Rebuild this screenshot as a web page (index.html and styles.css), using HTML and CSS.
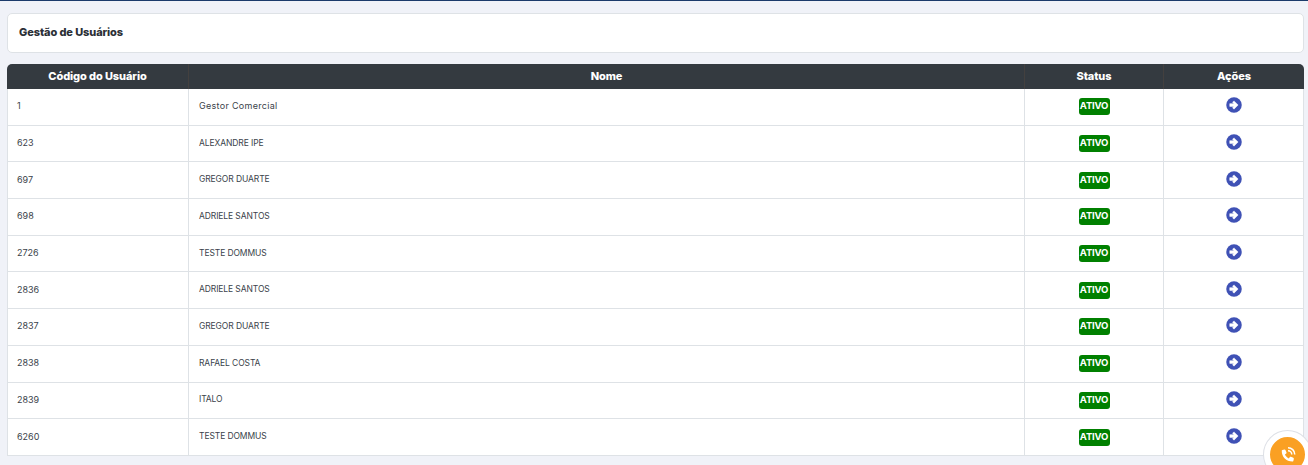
FILE: index.html
```html
<!DOCTYPE html>
<html lang="pt-BR">
<head>
<meta charset="utf-8">
<title>Gestão de Usuários</title>
<link rel="stylesheet" href="styles.css">
</head>
<body>
<svg class="defs" aria-hidden="true"><symbol id="go" viewBox="0 0 512 512"><circle cx="256" cy="256" r="248" fill="#3f51b5"/><path fill="#fff" stroke="#fff" stroke-width="16" stroke-linejoin="round" d="M120 212h130l-40-44 44-44 134 132-134 132-44-44 40-44H120z"/></symbol></svg>
<main class="page">
  <header class="title-card"><h1>Gestão de Usuários</h1></header>
  <table class="users">
    <colgroup><col class="c1"><col class="c2"><col class="c3"><col class="c4"></colgroup>
    <thead><tr><th>Código do Usuário</th><th>Nome</th><th>Status</th><th>Ações</th></tr></thead>
    <tbody>
      <tr><td>1</td><td class="name">Gestor Comercial</td><td class="mid"><span class="badge">ATIVO</span></td><td class="mid"><a class="go"><svg><use href="#go"/></svg></a></td></tr>
      <tr><td>623</td><td class="name upper">ALEXANDRE IPE</td><td class="mid"><span class="badge">ATIVO</span></td><td class="mid"><a class="go"><svg><use href="#go"/></svg></a></td></tr>
      <tr><td>697</td><td class="name upper">GREGOR DUARTE</td><td class="mid"><span class="badge">ATIVO</span></td><td class="mid"><a class="go"><svg><use href="#go"/></svg></a></td></tr>
      <tr><td>698</td><td class="name upper">ADRIELE SANTOS</td><td class="mid"><span class="badge">ATIVO</span></td><td class="mid"><a class="go"><svg><use href="#go"/></svg></a></td></tr>
      <tr><td>2726</td><td class="name upper">TESTE DOMMUS</td><td class="mid"><span class="badge">ATIVO</span></td><td class="mid"><a class="go"><svg><use href="#go"/></svg></a></td></tr>
      <tr><td>2836</td><td class="name upper">ADRIELE SANTOS</td><td class="mid"><span class="badge">ATIVO</span></td><td class="mid"><a class="go"><svg><use href="#go"/></svg></a></td></tr>
      <tr><td>2837</td><td class="name upper">GREGOR DUARTE</td><td class="mid"><span class="badge">ATIVO</span></td><td class="mid"><a class="go"><svg><use href="#go"/></svg></a></td></tr>
      <tr><td>2838</td><td class="name upper">RAFAEL COSTA</td><td class="mid"><span class="badge">ATIVO</span></td><td class="mid"><a class="go"><svg><use href="#go"/></svg></a></td></tr>
      <tr><td>2839</td><td class="name upper">ITALO</td><td class="mid"><span class="badge">ATIVO</span></td><td class="mid"><a class="go"><svg><use href="#go"/></svg></a></td></tr>
      <tr><td>6260</td><td class="name upper">TESTE DOMMUS</td><td class="mid"><span class="badge">ATIVO</span></td><td class="mid"><a class="go"><svg><use href="#go"/></svg></a></td></tr>
    </tbody>
  </table>
</main>
<div class="call">
  <svg viewBox="0 0 24 24"><path fill="#fff" d="M6.600 3.200l2.300-.6c.5-.1 1 .1 1.200.6l1.200 2.800c.2.400.1.900-.3 1.200L9.500 8.400c.9 2 2.500 3.600 4.500 4.500l1.200-1.500c.3-.4.8-.5 1.200-.3l2.800 1.200c.5.200.7.700.6 1.200l-.6 2.300c-.1.500-.5.800-1 .8C10.900 16.600 5.800 11.500 5.800 4.200c0-.5.300-.9.800-1z" transform="translate(-3 3) scale(1.150)"/><path fill="none" stroke="#fff" stroke-width="2" d="M12 7.500a5 5 0 0 1 5 5M12 3.500a9 9 0 0 1 9 9"/></svg>
</div>
</body>
</html>
```
FILE: styles.css
```css
* { box-sizing: border-box; }
html, body { margin: 0; height: 465px; overflow: hidden; }
body {
  background: #f0f2f8;
  border-top: 1px solid #1b3a6b;
  font-family: Inter, "Open Sans", sans-serif;
  color: #3a3f4a;
}
.defs { display: none; }
.page { padding: 12px 4px 0 7px; }
.title-card {
  height: 40px;
  background: #fff;
  border: 1px solid #dee2e6;
  border-radius: 5px;
  display: flex;
  align-items: center;
  padding: 0 11px 2px;
  margin-bottom: 11px;
}
.title-card h1 { margin: 0; font-size: 11px; font-weight: 800; letter-spacing: -0.1px; color: #2b2f36; }
.users {
  width: 1297px;
  table-layout: fixed;
  border-collapse: separate;
  border-spacing: 0;
  font-size: 9px;
}
.c1 { width: 181px; }
.c2 { width: 836px; }
.c3 { width: 139px; }
.c4 { width: 141px; }
th {
  height: 25px;
  padding: 0 0 1px;
  background: #343a40;
  color: #fff;
  font-size: 11px;
  font-weight: 800;
  letter-spacing: -0.1px;
  text-align: center;
  vertical-align: middle;
  border-left: 1px solid #43403f;
}
th:first-child { border-left: 0; border-top-left-radius: 5px; }
th:last-child { border-top-right-radius: 5px; }
td {
  height: 36.7px;
  padding: 0 0 2px 9px;
  background: #fff;
  border-left: 1px solid #dee2e6;
  border-bottom: 1px solid #dee2e6;
  vertical-align: middle;
}
tr td:last-child { border-right: 1px solid #dee2e6; }
.mid { padding-left: 0; padding-bottom: 0; text-align: center; }
.name { padding-left: 10px; font-size: 9px; letter-spacing: 0.3px; }
.upper { font-size: 8.5px; letter-spacing: -0.1px; }
.badge {
  display: inline-block;
  width: 31px;
  height: 17px;
  line-height: 16px;
  background: #008000;
  color: #fff;
  border-radius: 3px;
  font-size: 9.5px;
  font-weight: 700;
  letter-spacing: -0.2px;
  text-align: center;
  vertical-align: middle;
}
.go { display: inline-flex; vertical-align: middle; margin-bottom: 3px; }
.go svg { width: 16px; height: 16px; }
.call {
  position: fixed;
  left: 1264px;
  top: 431px;
  width: 47px;
  height: 47px;
  border-radius: 50%;
  background: #faa023;
  border: 6px solid #fff;
  box-shadow: 0 0 0 1px #dde0e6;
  display: flex;
  justify-content: center;
  padding-top: 8px;
}
.call svg { width: 18px; height: 18px; flex: none; }
```
